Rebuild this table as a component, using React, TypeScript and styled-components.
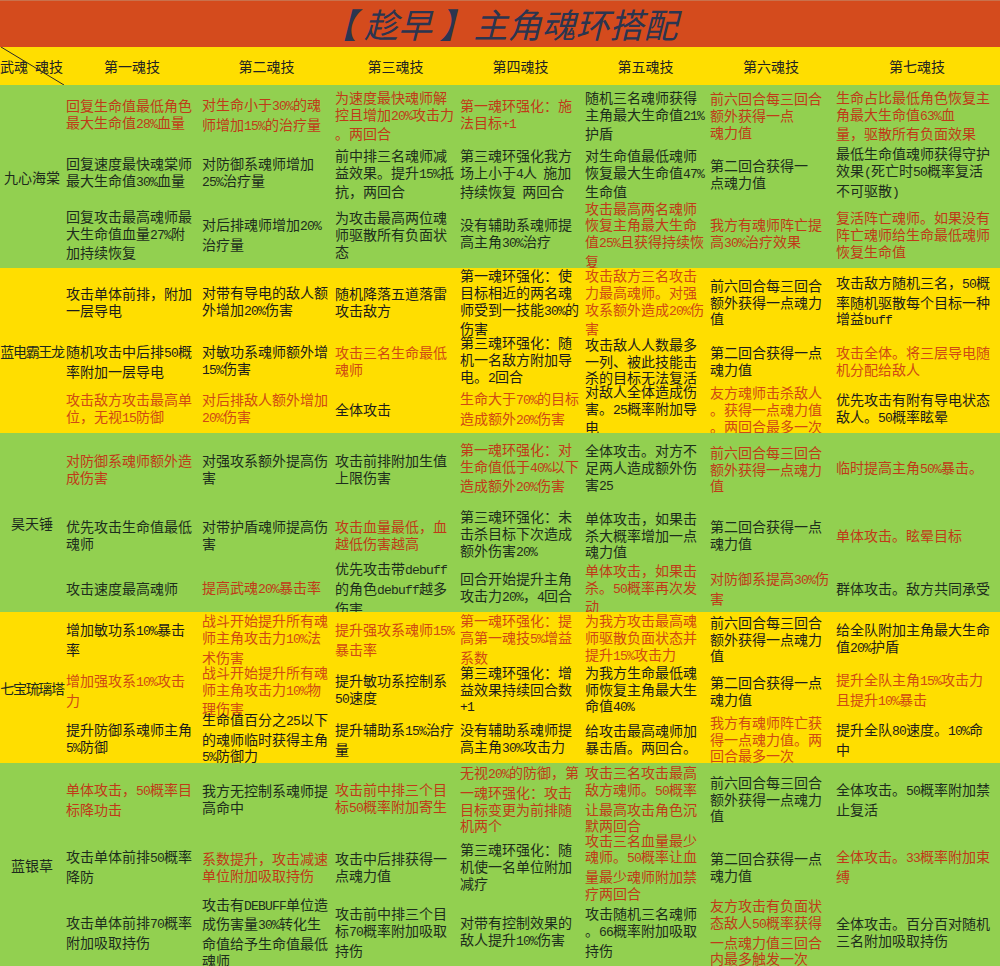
import React from 'react';
import styled, { createGlobalStyle } from 'styled-components';

const GlobalStyle = createGlobalStyle`
  html, body { margin: 0; padding: 0; background: #92d050; }
  body { font-family: "Noto Sans CJK SC", "Noto Sans", sans-serif; }
`;

const COLS = '64px 136px 133px 125px 125px 125px 126px 166px';
const GREEN = '#92d050';
const YELLOW = '#ffde00';

type Tone = 'r' | 'k';
type CellData = [Tone, string];
type GroupData = {
  name: string;
  bg: 'green' | 'yellow';
  rows: string;
  cells: CellData[][];
};

const GROUPS: GroupData[] = [
  {
    name: '九心海棠',
    bg: 'green',
    rows: '61px 55px 67px',
    cells: [
      [
        ['r', '回复生命值最低角色\n最大生命值28%血量'],
        ['r', '对生命小于30%的魂\n师增加15%的治疗量'],
        ['r', '为速度最快魂师解\n控且增加20%攻击力\n。两回合'],
        ['r', '第一魂环强化：施\n法目标+1'],
        ['k', '随机三名魂师获得\n主角最大生命值21%\n护盾'],
        ['r', '前六回合每三回合\n额外获得一点\n魂力值'],
        ['r', '生命占比最低角色恢复主\n角最大生命值63%血\n量，驱散所有负面效果'],
      ],
      [
        ['k', '回复速度最快魂棠师\n最大生命值30%血量'],
        ['k', '对防御系魂师增加\n25%治疗量'],
        ['k', '前中排三名魂师减\n益效果。提升15%抵\n抗，两回合'],
        ['k', '第三魂环强化我方\n场上小于4人  施加\n持续恢复  两回合'],
        ['k', '对生命值最低魂师\n恢复最大生命值47%\n生命值'],
        ['k', '第二回合获得一\n点魂力值'],
        ['k', '最低生命值魂师获得守护\n效果(死亡时50概率复活\n不可驱散)'],
      ],
      [
        ['k', '回复攻击最高魂师最\n大生命值血量27%附\n加持续恢复'],
        ['k', '对后排魂师增加20%\n治疗量'],
        ['k', '为攻击最高两位魂\n师驱散所有负面状\n态'],
        ['k', '没有辅助系魂师提\n高主角30%治疗'],
        ['r', '攻击最高两名魂师\n恢复主角最大生命\n值25%且获得持续恢\n复'],
        ['r', '我方有魂师阵亡提\n高30%治疗效果'],
        ['r', '复活阵亡魂师。如果没有\n阵亡魂师给生命最低魂师\n恢复生命值'],
      ],
    ],
  },
  {
    name: '蓝电霸王龙',
    bg: 'yellow',
    rows: '68px 50px 47px',
    cells: [
      [
        ['k', '攻击单体前排，附加\n一层导电'],
        ['k', '对带有导电的敌人额\n外增加20%伤害'],
        ['k', '随机降落五道落雷\n攻击敌方'],
        ['k', '第一魂环强化：使\n目标相近的两名魂\n师受到一技能30%的\n伤害'],
        ['r', '攻击敌方三名攻击\n力最高魂师。对强\n攻系额外造成20%伤\n害'],
        ['k', '前六回合每三回合\n额外获得一点魂力\n值'],
        ['k', '攻击敌方随机三名，50概\n率随机驱散每个目标一种\n增益buff'],
      ],
      [
        ['k', '随机攻击中后排50概\n率附加一层导电'],
        ['k', '对敏功系魂师额外增\n15%伤害'],
        ['r', '攻击三名生命最低\n魂师'],
        ['k', '第三魂环强化：随\n机一名敌方附加导\n电。2回合'],
        ['k', '攻击敌人人数最多\n一列、被此技能击\n杀的目标无法复活'],
        ['k', '第二回合获得一点\n魂力值'],
        ['r', '攻击全体。将三层导电随\n机分配给敌人'],
      ],
      [
        ['r', '攻击敌方攻击最高单\n位，无视15防御'],
        ['r', '对后排敌人额外增加\n20%伤害'],
        ['k', '全体攻击'],
        ['r', '生命大于70%的目标\n造成额外20%伤害'],
        ['k', '对敌人全体造成伤\n害。25概率附加导\n电'],
        ['r', '友方魂师击杀敌人\n。获得一点魂力值\n。两回合最多一次'],
        ['k', '优先攻击有附有导电状态\n敌人。50概率眩晕'],
      ],
    ],
  },
  {
    name: '昊天锤',
    bg: 'green',
    rows: '72px 60px 47px',
    cells: [
      [
        ['r', '对防御系魂师额外造\n成伤害'],
        ['k', '对强攻系额外提高伤\n害'],
        ['k', '攻击前排附加生值\n上限伤害'],
        ['r', '第一魂环强化：对\n生命值低于40%以下\n造成额外20%伤害'],
        ['k', '全体攻击。对方不\n足两人造成额外伤\n害25'],
        ['r', '前六回合每三回合\n额外获得一点魂力\n值'],
        ['r', '临时提高主角50%暴击。'],
      ],
      [
        ['k', '优先攻击生命值最低\n魂师'],
        ['k', '对带护盾魂师提高伤\n害'],
        ['r', '攻击血量最低，血\n越低伤害越高'],
        ['k', '第三魂环强化：未\n击杀目标下次造成\n额外伤害20%'],
        ['k', '单体攻击，如果击\n杀大概率增加一点\n魂力值'],
        ['k', '第二回合获得一点\n魂力值'],
        ['r', '单体攻击。眩晕目标'],
      ],
      [
        ['k', '攻击速度最高魂师'],
        ['r', '提高武魂20%暴击率'],
        ['k', '优先攻击带debuff\n的角色debuff越多\n伤害'],
        ['k', '回合开始提升主角\n攻击力20%，4回合'],
        ['r', '单体攻击，如果击\n杀。50概率再次发\n动'],
        ['r', '对防御系提高30%伤\n害'],
        ['k', '群体攻击。敌方共同承受'],
      ],
    ],
  },
  {
    name: '七宝琉璃塔',
    bg: 'yellow',
    rows: '54px 49px 48px',
    cells: [
      [
        ['k', '增加敏功系10%暴击\n率'],
        ['r', '战斗开始提升所有魂\n师主角攻击力10%法\n术伤害'],
        ['r', '提升强攻系魂师15%\n暴击率'],
        ['r', '第一魂环强化：提\n高第一魂技5%增益\n系数'],
        ['r', '为我方攻击最高魂\n师驱散负面状态并\n提升15%攻击力'],
        ['k', '前六回合每三回合\n额外获得一点魂力\n值'],
        ['k', '给全队附加主角最大生命\n值20%护盾'],
      ],
      [
        ['r', '增加强攻系10%攻击\n力'],
        ['r', '战斗开始提升所有魂\n师主角攻击力10%物\n理伤害'],
        ['k', '提升敏功系控制系\n50速度'],
        ['k', '第三魂环强化：增\n益效果持续回合数\n+1'],
        ['k', '为我方生命最低魂\n师恢复主角最大生\n命值40%'],
        ['k', '第二回合获得一点\n魂力值'],
        ['r', '提升全队主角15%攻击力\n且提升10%暴击'],
      ],
      [
        ['k', '提升防御系魂师主角\n5%防御'],
        ['k', '生命值百分之25以下\n的魂师临时获得主角\n5%防御力'],
        ['k', '提升辅助系15%治疗\n量'],
        ['k', '没有辅助系魂师提\n高主角30%攻击力'],
        ['k', '给攻击最高魂师加\n暴击盾。两回合。'],
        ['r', '我方有魂师阵亡获\n得一点魂力值。两\n回合最多一次'],
        ['k', '提升全队80速度。10%命\n中'],
      ],
    ],
  },
  {
    name: '蓝银草',
    bg: 'green',
    rows: '72px 63px 68px',
    cells: [
      [
        ['r', '单体攻击，50概率目\n标降功击'],
        ['k', '我方无控制系魂师提\n高命中'],
        ['r', '攻击前中排三个目\n标50概率附加寄生'],
        ['r', '无视20%的防御，第\n一魂环强化：攻击\n目标变更为前排随\n机两个'],
        ['r', '攻击三名攻击最高\n敌方魂师。50概率\n让最高攻击角色沉\n默两回合'],
        ['k', '前六回合每三回合\n额外获得一点魂力\n值'],
        ['k', '全体攻击。50概率附加禁\n止复活'],
      ],
      [
        ['k', '攻击单体前排50概率\n降防'],
        ['r', '系数提升，攻击减速\n单位附加吸取持伤'],
        ['k', '攻击中后排获得一\n点魂力值'],
        ['k', '第三魂环强化：随\n机使一名单位附加\n减疗'],
        ['r', '攻击三名血量最少\n魂师。50概率让血\n量最少魂师附加禁\n疗两回合'],
        ['k', '第二回合获得一点\n魂力值'],
        ['r', '全体攻击。33概率附加束\n缚'],
      ],
      [
        ['k', '攻击单体前排70概率\n附加吸取持伤'],
        ['k', '攻击有DEBUFF单位造\n成伤害量30%转化生\n命值给予生命值最低\n魂师'],
        ['k', '攻击前中排三个目\n标70概率附加吸取\n持伤'],
        ['k', '对带有控制效果的\n敌人提升10%伤害'],
        ['k', '攻击随机三名魂师\n。66概率附加吸取\n持伤'],
        ['r', '友方攻击有负面状\n态敌人50概率获得\n一点魂力值三回合\n内最多触发一次'],
        ['k', '全体攻击。百分百对随机\n三名附加吸取持伤'],
      ],
    ],
  },
];

const HEADERS = ['第一魂技', '第二魂技', '第三魂技', '第四魂技', '第五魂技', '第六魂技', '第七魂技'];

const Page = styled.main`
  width: 1000px;
  height: 966px;
  overflow: hidden;
  display: flex;
  flex-direction: column;
  font-family: "Noto Sans CJK SC", "Noto Sans", sans-serif;
`;

const TitleBar = styled.header`
  flex: 0 0 47px;
  box-sizing: border-box;
  border-top: 1px solid #c9714c;
  background: #d44b1d;
  display: flex;
  align-items: center;
  justify-content: center;
`;

const Title = styled.h1`
  margin: 0;
  font-family: "Noto Sans CJK SC", sans-serif;
  font-style: italic;
  font-weight: 400;
  font-size: 34px;
  line-height: 1;
  color: #2b3550;
  white-space: pre;
  text-spacing-trim: space-all;
`;

const HeaderRow = styled.div`
  flex: 0 0 38px;
  display: grid;
  grid-template-columns: ${COLS};
  align-items: center;
  background: ${YELLOW};
`;

const HeadCell = styled.div`
  text-align: center;
  font-size: 14px;
  line-height: 17px;
  color: #222;
`;

const CornerCell = styled.div`
  position: relative;
  height: 100%;
  display: flex;
  align-items: center;
  justify-content: space-between;
  padding-right: 1px;
  font-size: 14px;
  color: #222;
`;

const Diagonal = styled.svg`
  position: absolute;
  left: 0;
  top: 0;
  width: 100%;
  height: 100%;
`;

const Group = styled.section<{ $bg: string; $rows: string }>`
  display: grid;
  grid-template-columns: ${COLS};
  grid-template-rows: ${(p) => p.$rows};
  background: ${(p) => p.$bg};
  flex: 0 0 auto;
`;

const NameCell = styled.div<{ $tight: boolean }>`
  grid-row: 1 / span 3;
  grid-column: 1;
  display: flex;
  align-items: center;
  justify-content: center;
  white-space: nowrap;
  font-size: 14px;
  letter-spacing: ${(p) => (p.$tight ? '-1.3px' : '0')};
  color: #1d2a1d;
`;

const Cell = styled.div<{ $tone: Tone; $onYellow: boolean }>`
  display: flex;
  align-items: center;
  min-height: 0;
  min-width: 0;
  padding: 0 2px;
  font-size: 14px;
  line-height: 16.7px;
  color: ${(p) =>
    p.$tone === 'r' ? (p.$onYellow ? '#cf4a14' : '#c03a18') : p.$onYellow ? '#1c1c1c' : '#1d2d1d'};
`;

const CellText = styled.div`
  white-space: pre;
`;

const Latin = styled.span`
  font-family: "Liberation Mono", "DejaVu Sans Mono", monospace;
  font-size: 13px;
  letter-spacing: -0.8px;
`;

const rich = (text: string) =>
  text.split(/([\x21-\x7e]+)/).map((part, i) =>
    /^[\x21-\x7e]+$/.test(part) ? <Latin key={i}>{part}</Latin> : part
  );

export default function App() {
  return (
    <Page>
      <GlobalStyle />
      <TitleBar>
        <Title>{'【 趁早 】主角魂环搭配'}</Title>
      </TitleBar>
      <HeaderRow>
        <CornerCell>
          <span>武魂</span>
          <span>魂技</span>
          <Diagonal viewBox="0 0 64 38" preserveAspectRatio="none">
            <line x1="1" y1="0" x2="64" y2="38" stroke="#2a2a2a" strokeWidth="1" />
          </Diagonal>
        </CornerCell>
        {HEADERS.map((h) => (
          <HeadCell key={h}>{h}</HeadCell>
        ))}
      </HeaderRow>
      {GROUPS.map((g) => {
        const onYellow = g.bg === 'yellow';
        return (
          <Group key={g.name} $bg={onYellow ? YELLOW : GREEN} $rows={g.rows}>
            <NameCell $tight={g.name.length > 4}>{g.name}</NameCell>
            {g.cells.map((row, ri) =>
              row.map(([tone, text], ci) => (
                <Cell
                  key={`${ri}-${ci}`}
                  $tone={tone}
                  $onYellow={onYellow}
                  style={{ gridRow: ri + 1, gridColumn: ci + 2 }}
                >
                  <CellText>{rich(text)}</CellText>
                </Cell>
              ))
            )}
          </Group>
        );
      })}
    </Page>
  );
}
